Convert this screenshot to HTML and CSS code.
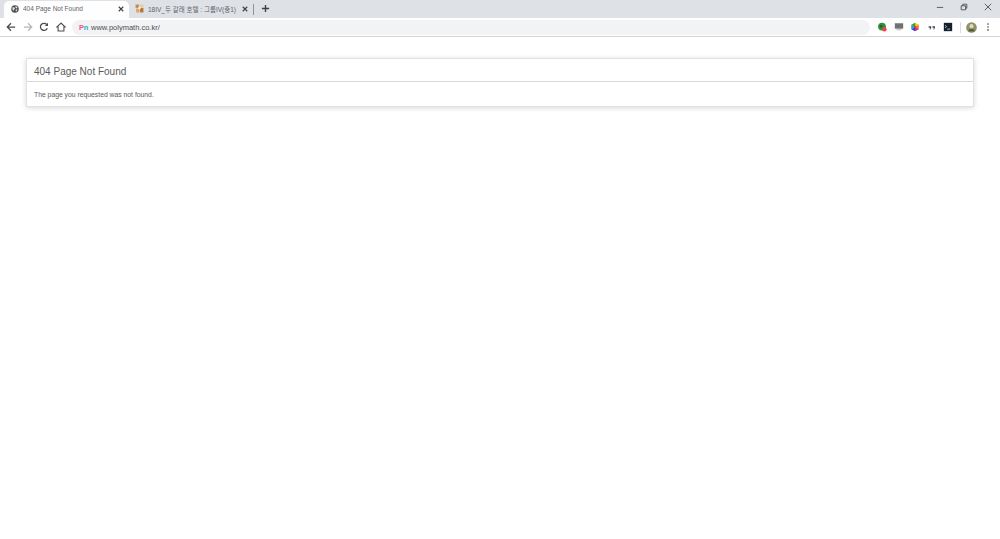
FILE: index.html
```
<!DOCTYPE html>
<html lang="en">
<head>
<meta charset="utf-8">
<title>404 Page Not Found</title>
<link rel="stylesheet" href="styles.css">
</head>
<body>
<header class="chrome">
  <div class="tabstrip">
    <div class="tab tab-active">
      <svg class="favicon" viewBox="0 0 16 16"><circle cx="8" cy="8" r="7.5" fill="#4a4d51"/><path d="M3 4l4 1 1 3-2 1-1 3-2-3zM9 2l4 2-1 3-3-1zM10 9l3 0-2 4-2-1z" fill="#dfe1e5"/></svg>
      <span class="tab-title">404 Page Not Found</span>
      <svg class="tab-x" viewBox="0 0 8 8"><path d="M1 1l6 6M7 1L1 7" stroke="#3c4043" stroke-width="1.5"/></svg>
    </div>
    <div class="tab tab-other">
      <svg class="favicon" viewBox="0 0 16 16"><rect x="1" y="1" width="6" height="6" fill="#c98a4b"/><rect x="8" y="1" width="7" height="5" fill="#e9c9a0"/><rect x="2" y="8" width="6" height="7" fill="#e0a660"/><rect x="9" y="7" width="6" height="8" fill="#b5763c"/><rect x="6" y="5" width="4" height="4" fill="#f6efe4"/></svg>
      <span class="tab-title">18IV_두 갈래 호텔 : 그룹IV(중1)</span>
      <svg class="tab-x" viewBox="0 0 8 8"><path d="M1 1l6 6M7 1L1 7" stroke="#3c4043" stroke-width="1.5"/></svg>
    </div>
    <span class="tab-sep"></span>
    <svg class="newtab" viewBox="0 0 10 10"><path d="M5 1v8M1 5h8" stroke="#3c4043" stroke-width="1.5"/></svg>
    <div class="winctl">
      <svg viewBox="0 0 10 10"><path d="M1 5.5h8" stroke="#3c4043"/></svg>
      <svg viewBox="0 0 10 10"><path d="M1.5 3.5h5.5v5h-5.5zM3.5 3.5v-2h5v5h-1.5" fill="none" stroke="#3c4043"/></svg>
      <svg viewBox="0 0 10 10"><path d="M1 1l8 8M9 1l-8 8" stroke="#3c4043"/></svg>
    </div>
  </div>
  <div class="toolbar">
    <svg class="nav" viewBox="0 0 12 12"><path d="M11 6H2M6 1.5L1.5 6 6 10.500" fill="none" stroke="#4a4d51" stroke-width="1.5"/></svg>
    <svg class="nav" viewBox="0 0 12 12"><path d="M1 6h9M6 1.500L10.500 6 6 10.500" fill="none" stroke="#b4b7bb" stroke-width="1.5"/></svg>
    <svg class="nav" viewBox="0 0 12 12"><path d="M10 7.500A4.300 4.300 0 1 1 9.300 3" fill="none" stroke="#4a4d51" stroke-width="1.500"/><path d="M10.800 1v3.700H7.100z" fill="#4a4d51"/></svg>
    <svg class="nav" viewBox="0 0 12 12"><path d="M6 1.300L1 6h1.500v4.700h7V6H11z" fill="none" stroke="#4a4d51" stroke-width="1.300"/></svg>
    <div class="omnibox">
      <span class="site-badge"><span class="badge-p">P</span><span class="badge-n">n</span></span>
      <span class="url">www.polymath.co.kr/</span>
    </div>
    <div class="extensions">
      <svg class="ext" viewBox="0 0 12 12"><circle cx="6" cy="5.500" r="4.700" fill="#2f8f3c"/><circle cx="8.800" cy="8.800" r="2.700" fill="#e04a3f"/><circle cx="5" cy="5" r="1.500" fill="#1f5c28"/></svg>
      <svg class="ext" viewBox="0 0 12 12"><rect x="1" y="1.500" width="10" height="6.500" fill="#6f7174"/><rect x="3" y="8.500" width="6" height="1.500" fill="#c4c6c8"/></svg>
      <svg class="ext" viewBox="0 0 12 12"><path d="M6 6V.800L10.500 3.400z" fill="#f0c419"/><path d="M6 6L10.500 3.400V8.600z" fill="#e8742a"/><path d="M6 6L10.500 8.600 6 11.200z" fill="#c52a8a"/><path d="M6 6V11.200L1.500 8.600z" fill="#2a48d8"/><path d="M6 6L1.500 8.600V3.400z" fill="#1f9bd1"/><path d="M6 6L1.500 3.400 6 .800z" fill="#2f9e44"/><circle cx="6" cy="6" r="1.400" fill="#e0362c"/></svg>
      <svg class="ext" viewBox="0 0 12 12"><path d="M2 5h3v2l-1 2h-.8l.4-2H2zM6.500 5h3v2l-1 2h-.8l.4-2H6.500z" fill="#44474a"/></svg>
      <svg class="ext" viewBox="0 0 12 12"><rect x="1" y="1" width="10" height="10" fill="#14202b"/><path d="M2.500 4l1.800 1.500L2.500 7M5 8.500h3.500" fill="none" stroke="#fff" stroke-width=".8"/></svg>
    </div>
    <span class="tool-sep"></span>
    <svg class="avatar" viewBox="0 0 12 12"><circle cx="6" cy="6" r="5.800" fill="#8f9268"/><circle cx="6" cy="4.500" r="2.200" fill="#e3d9bc"/><path d="M2.500 10c1-3 6-3 7 0z" fill="#4f5a36"/></svg>
    <svg class="menu" viewBox="0 0 4 12"><circle cx="2" cy="2.500" r="1" fill="#4a4d51"/><circle cx="2" cy="6" r="1" fill="#4a4d51"/><circle cx="2" cy="9.500" r="1" fill="#4a4d51"/></svg>
  </div>
</header>
<main class="page">
  <section class="panel">
    <h1 class="panel-title">404 Page Not Found</h1>
    <p class="panel-body">The page you requested was not found.</p>
  </section>
</main>
</body>
</html>
```
FILE: styles.css
```
* { box-sizing: border-box; }
html, body { margin: 0; height: 100%; background: #fff; overflow: hidden; }
body { font-family: "Liberation Sans", Arial, sans-serif; }
svg { display: block; flex: none; }
.chrome { height: 37px; background: #fff; border-bottom: 1px solid #d3d5d8; }
.tabstrip { height: 18px; background: #dee1e6; display: flex; align-items: flex-end; padding-left: 4px; }
.tab { height: 17px; width: 125px; display: flex; align-items: center; padding: 0 5px 2px 7px; font-size: 6.500px; color: #5f6368; opacity: .99; }
.tab-active { background: #fff; border-radius: 5px 5px 0 0; }
.tab-other { width: 124px; padding-left: 6px; }
.favicon { width: 8px; height: 8px; margin-right: 4px; }
.tab-other .favicon { width: 9px; height: 9px; }
.tab-title { flex: 1; min-width: 0; white-space: nowrap; font-family: "Liberation Sans", "Noto Sans CJK KR", sans-serif; }
.tab-x { width: 6px; height: 6px; margin-left: 4px; }
.tab-sep { width: 1px; height: 11px; background: #8e9195; margin: 0 0 3px 0; }
.newtab { width: 9px; height: 9px; margin: 0 0 5px 7px; }
.winctl { margin-left: auto; align-self: flex-start; display: flex; gap: 16px; padding: 3px 8px 0 0; }
.winctl svg { width: 8px; height: 8px; }
.toolbar { height: 18px; display: flex; align-items: center; padding: 0 10px 0 6px; }
.nav { width: 10px; height: 10px; margin-right: 7px; }
.nav:nth-child(2) { margin-right: 6px; }
.nav:nth-child(4) { margin-right: 6px; }
.omnibox { flex: 1; height: 15px; background: #f1f3f4; border-radius: 8px; display: flex; align-items: center; padding-left: 7px; font-size: 7.500px; color: #4a4d51; opacity: .99; }
.site-badge { font-size: 7.500px; font-weight: bold; width: 12px; letter-spacing: -0.300px; }
.badge-p { color: #ef5a73; }
.badge-n { color: #2aa7c9; }
.extensions { display: flex; gap: 6.500px; margin-left: 7px; }
.ext { width: 10px; height: 10px; }
.tool-sep { width: 1px; height: 11px; background: #dadce0; margin: 0 5px 0 7px; }
.avatar { width: 11px; height: 11px; margin-right: 9px; }
.menu { width: 4px; height: 10px; }
.page { padding: 21px 26px 0 26px; }
.panel { border: 1px solid #e2e2e2; box-shadow: 0 1px 5px rgba(0, 0, 0, .16); background: #fff; color: #5a5a5a; opacity: .99; }
.panel-title { margin: 0; padding: 6px 7px 0; height: 23px; font-size: 10px; line-height: 14px; font-weight: normal; border-bottom: 1px solid #d8d8d8; }
.panel-body { margin: 0; padding: 8px 7px 0; height: 24px; font-size: 6.800px; line-height: 10px; }
```
